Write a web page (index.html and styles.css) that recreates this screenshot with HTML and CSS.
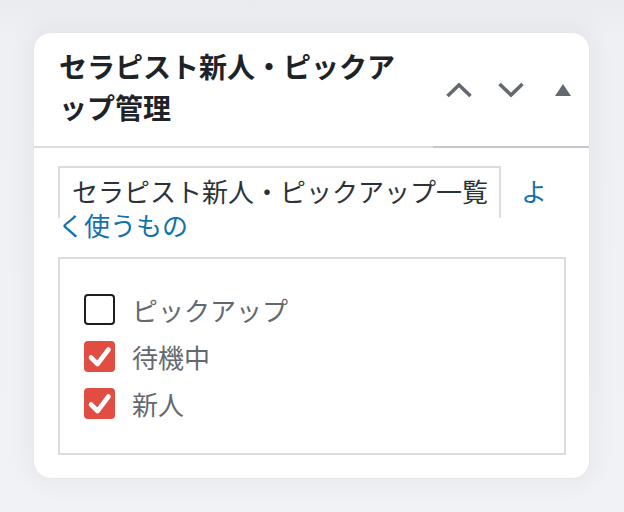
FILE: index.html
```html
<!DOCTYPE html>
<html lang="ja">
<head>
<meta charset="utf-8">
<title>セラピスト新人・ピックアップ管理</title>
<link rel="stylesheet" href="styles.css">
</head>
<body>
<div class="postbox">
  <div class="postbox-header">
    <h2 class="hndle">セラピスト新人・ピックアップ管理</h2>
    <div class="handle-actions">
      <button class="handle-btn" type="button" aria-label="上へ移動">
        <svg width="28" height="16" viewBox="0 0 28 16"><polyline points="2.5,14 14,3 25.5,14" fill="none" stroke="#646970" stroke-width="3.6"/></svg>
      </button>
      <button class="handle-btn" type="button" aria-label="下へ移動">
        <svg width="28" height="16" viewBox="0 0 28 16"><polyline points="2.5,2 14,13 25.5,2" fill="none" stroke="#646970" stroke-width="3.6"/></svg>
      </button>
      <button class="handle-btn" type="button" aria-label="パネルを切り替え">
        <svg width="16" height="12" viewBox="0 0 16 12"><polygon points="8,0 16,12 0,12" fill="#646970"/></svg>
      </button>
    </div>
  </div>
  <div class="inside">
    <p class="category-tabs"><span class="tab-active">セラピスト新人・ピックアップ一覧</span><a class="tab-link" href="#">よく使うもの</a></p>
    <div class="tabs-panel">
      <ul class="checklist">
        <li class="check-row"><span class="checkbox"></span><span class="check-label">ピックアップ</span></li>
        <li class="check-row"><span class="checkbox is-checked"><svg width="31" height="31" viewBox="0 0 31 31"><polyline points="7,16.5 13.5,23 24.5,8.5" fill="none" stroke="#fff" stroke-width="4.6" stroke-linecap="round" stroke-linejoin="round"/></svg></span><span class="check-label">待機中</span></li>
        <li class="check-row"><span class="checkbox is-checked"><svg width="31" height="31" viewBox="0 0 31 31"><polyline points="7,16.5 13.5,23 24.5,8.5" fill="none" stroke="#fff" stroke-width="4.6" stroke-linecap="round" stroke-linejoin="round"/></svg></span><span class="check-label">新人</span></li>
      </ul>
    </div>
  </div>
</div>
</body>
</html>
```

FILE: styles.css
```css
html, body {
  margin: 0;
  padding: 0;
}

body {
  width: 624px;
  height: 512px;
  overflow: hidden;
  background: linear-gradient(180deg, #eaebef 0px, #eff0f4 40px, #f1f2f5 100%);
  font-family: "Noto Sans CJK JP", "Noto Sans", sans-serif;
  padding-top: 32px;
  padding-left: 33px;
  box-sizing: border-box;
}

.postbox {
  width: 557px;
  box-sizing: border-box;
  background: #fff;
  border: 1px solid #e6e7eb;
  border-radius: 18px;
  box-shadow: 0 0 24px 4px rgba(40, 45, 80, 0.05);
  padding-bottom: 23px;
}

.postbox-header {
  display: flex;
  align-items: stretch;
}

.hndle {
  flex: 1;
  margin: 0;
  padding: 13px 20px 18px 25px;
  font-size: 28px;
  line-height: 41px;
  font-weight: 700;
  color: #1d2327;
  border-bottom: 2px solid #dcdde0;
}

.handle-actions {
  display: flex;
  border-bottom: 2px solid #c6c7ca;
}

.handle-btn {
  width: 52px;
  border: 0;
  background: none;
  padding: 0;
  display: flex;
  align-items: center;
  justify-content: center;
}

.handle-btn svg {
  display: block;
}

.inside {
  padding: 0 23px 0 24px;
}

.category-tabs {
  margin: 26px 0 0;
  font-size: 26px;
  line-height: 34px;
}

.tab-active {
  color: #2c3338;
  background: #fff;
  border: 2px solid #dcdcde;
  border-bottom-color: #fff;
  padding: 4px 11px 8px 12px;
}

.tab-link {
  color: #1272ab;
  text-decoration: none;
  margin-left: 20px;
}

.tabs-panel {
  margin-top: 15px;
  border: 2px solid #dcdcde;
  padding: 27px 24px 26px;
}

.checklist {
  list-style: none;
  margin: 0;
  padding: 0;
}

.check-row {
  display: flex;
  align-items: center;
  height: 47px;
  gap: 17px;
}

.checkbox {
  width: 31px;
  height: 31px;
  box-sizing: border-box;
  border: 2px solid #1e1e1e;
  border-radius: 4px;
  flex: none;
  position: relative;
}

.checkbox.is-checked {
  background: #e14d43;
  border-color: #e14d43;
}

.checkbox svg {
  position: absolute;
  left: -2px;
  top: -2px;
}

.check-label {
  font-size: 26px;
  line-height: 34px;
  color: #646970;
}
```
